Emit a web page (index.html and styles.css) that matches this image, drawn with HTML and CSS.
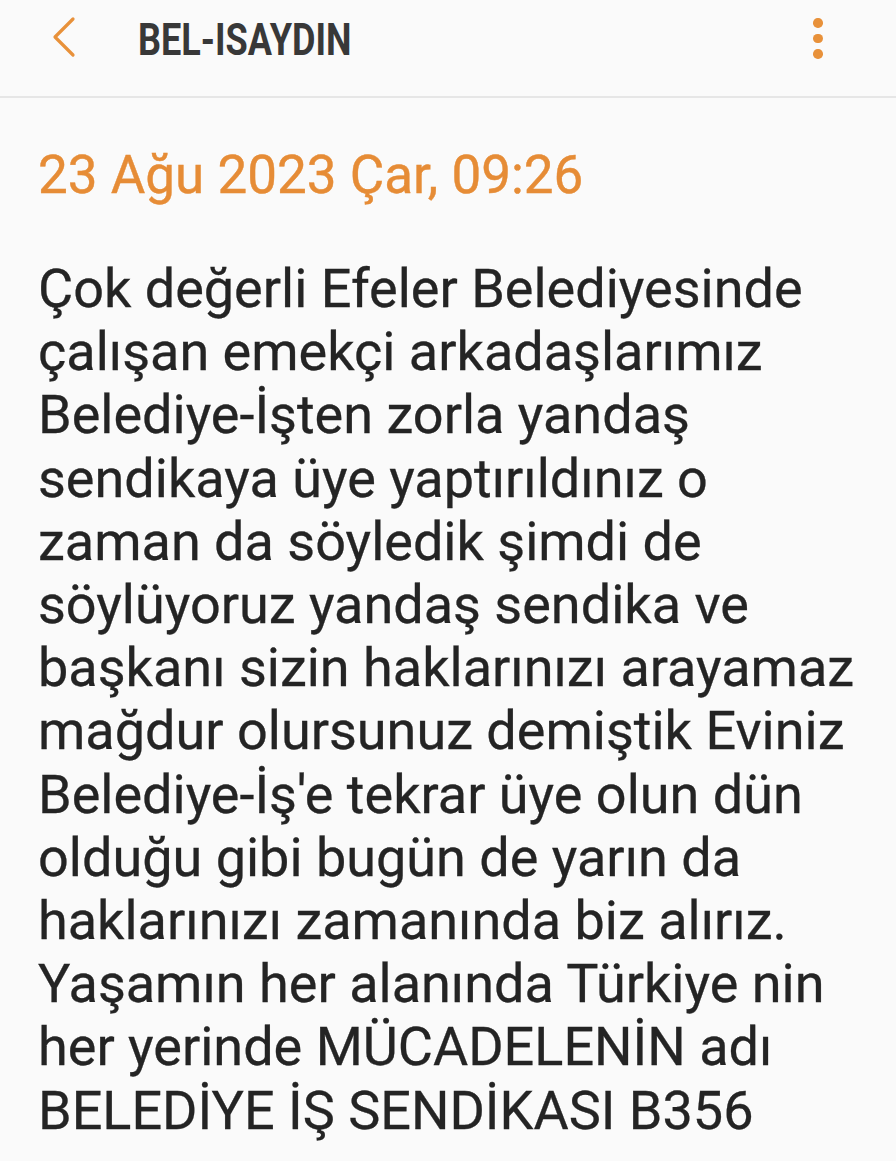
FILE: index.html
```html
<!DOCTYPE html>
<html lang="tr">
<head>
<meta charset="utf-8">
<link rel="stylesheet" href="styles.css">
</head>
<body>
<div class="app">
  <header class="bar">
    <div class="back">
      <svg width="30" height="44" viewBox="0 0 30 44"><polyline points="23,3 5,21 23,39" fill="none" stroke="#e8913a" stroke-width="3.2" stroke-linecap="round" stroke-linejoin="round"/></svg>
    </div>
    <div class="title"><span>BEL-ISAYDIN</span></div>
    <div class="menu">
      <span class="dot"></span><span class="dot"></span><span class="dot"></span>
    </div>
  </header>
  <main class="content">
    <div class="date">23 Ağu 2023 Çar, 09:26</div>
    <div class="msg">Çok değerli Efeler Belediyesinde<br>çalışan emekçi arkadaşlarımız<br>Belediye-İşten zorla yandaş<br>sendikaya üye yaptırıldınız o<br>zaman da söyledik şimdi de<br>söylüyoruz yandaş sendika ve<br>başkanı sizin haklarınızı arayamaz<br>mağdur olursunuz demiştik Eviniz<br>Belediye-İş'e tekrar üye olun dün<br>olduğu gibi bugün de yarın da<br>haklarınızı zamanında biz alırız.<br>Yaşamın her alanında Türkiye nin<br>her yerinde MÜCADELENİN adı<br>BELEDİYE İŞ SENDİKASI B356</div>
  </main>
</div>
</body>
</html>
```

FILE: styles.css
```css
html, body {
  margin: 0;
  padding: 0;
  background: #fafafa;
}
body {
  font-family: Roboto, "Noto Sans", sans-serif;
  width: 896px;
  height: 1161px;
  overflow: hidden;
}
.bar {
  height: 96px;
  border-bottom: 2px solid #e6e6e6;
  display: flex;
  align-items: flex-start;
  box-sizing: content-box;
}
.back {
  width: 52px;
  padding-left: 50px;
  padding-top: 16px;
}
.title {
  flex: 1;
  padding-left: 36px;
  padding-top: 14px;
}
.title span {
  display: inline-block;
  font-weight: 700;
  font-size: 44px;
  color: #383838;
  transform: scaleX(0.82);
  transform-origin: left center;
  line-height: 52px;
}
.menu {
  width: 10px;
  margin-right: 73px;
  padding-top: 18px;
  display: flex;
  flex-direction: column;
  gap: 6px;
}
.dot {
  width: 9.5px;
  height: 9.5px;
  border-radius: 50%;
  background: #e8913a;
}
.content {
  padding: 0 38px;
}
.date {
  color: #e68c36;
  font-size: 53px;
  line-height: 62px;
  margin-top: 46px;
  -webkit-text-stroke: 0.4px #e68c36;
}
.msg {
  color: #242424;
  font-size: 54px;
  line-height: 63.2px;
  margin-top: 51px;
  white-space: nowrap;
  -webkit-text-stroke: 0.3px #242424;
}
```
